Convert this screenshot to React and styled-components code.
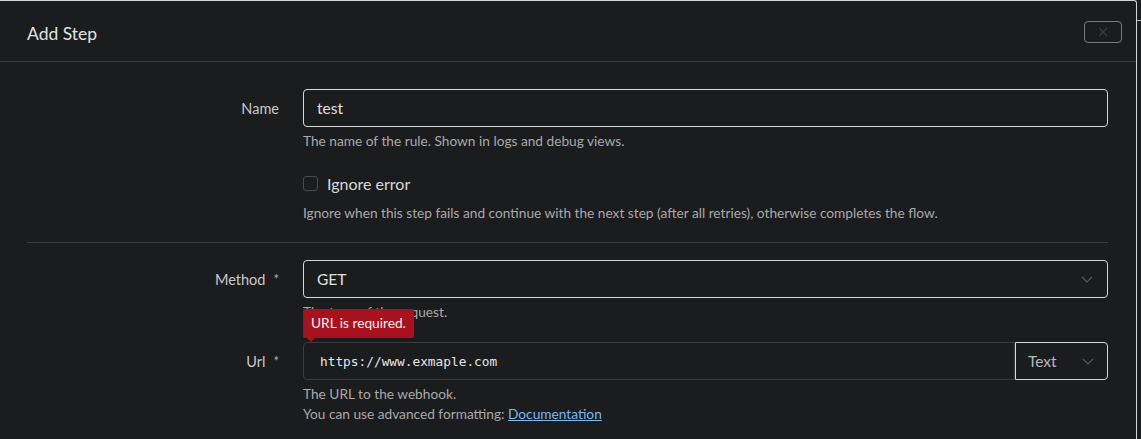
import React from 'react';
import styled, { createGlobalStyle } from 'styled-components';

const GlobalStyle = createGlobalStyle`
  html, body {
    margin: 0;
    padding: 0;
    background: #1b1c1e;
    overflow: hidden;
  }
  body {
    font-family: Lato, "Noto Sans", sans-serif;
    color: #dcdcdc;
  }
`;

const Page = styled.div`
  display: flex;
  height: 439px;
`;

const Modal = styled.div`
  width: 1137px;
  flex: none;
  background: #1b1c1e;
  border-top: 1px solid #d2d2d2;
  border-right: 1px solid #d2d2d2;
  border-top-right-radius: 3px;
  box-sizing: border-box;
`;

const Backdrop = styled.div`
  flex: 1;
  padding-top: 20px;

  &:before {
    content: '';
    display: block;
    height: 1px;
    background: #bdbdbd;
  }
`;

const Header = styled.div`
  display: flex;
  align-items: center;
  justify-content: space-between;
  height: 60px;
  padding: 0 14px 0 27px;
  border-bottom: 1px solid #3a3b3d;
`;

const Title = styled.h5`
  margin: 0;
  padding-top: 4px;
  font-size: 17.5px;
  font-weight: 400;
  color: #e2e2e2;
`;

const CloseButton = styled.button`
  display: flex;
  align-items: center;
  justify-content: center;
  width: 38px;
  height: 22px;
  margin-top: 1px;
  padding: 0;
  background: transparent;
  border: 1px solid #7a7a7a;
  border-radius: 4px;
  color: #3c3c3c;
`;

const Body = styled.div`
  padding: 27px 28px 0 27px;
`;

const Row = styled.div`
  display: grid;
  grid-template-columns: 252px 1fr;
  column-gap: 24px;
  align-items: start;
`;

const Label = styled.label`
  display: flex;
  justify-content: flex-end;
  align-items: center;
  gap: 8px;
  height: 38px;
  font-size: 14.5px;
  color: #c9c9c9;
`;

const Star = styled.span`
  font-size: 13px;
  color: #b0b0b0;
`;

const Field = styled.div`
  position: relative;
  display: flex;
  flex-direction: column;
`;

const Input = styled.div`
  display: flex;
  align-items: center;
  flex: ${({ joined }) => (joined ? '1' : 'none')};
  height: 38px;
  box-sizing: border-box;
  padding: 0 13px;
  border: 1px solid ${({ dim }) => (dim ? '#3a3b3d' : '#d6d6d6')};
  border-radius: ${({ joined }) => (joined ? '4px 0 0 4px' : '4px')};
  font-size: 15.5px;
  color: #e0e0e0;
`;

const Mono = styled.span`
  padding-left: 3px;
  font-family: "DejaVu Sans Mono", "Liberation Mono", monospace;
  font-size: 12.8px;
  color: #e6e6e6;
`;

const Select = styled(Input)`
  justify-content: space-between;
  padding-right: 14px;
`;

const InputGroup = styled.div`
  display: flex;
`;

const Addon = styled.div`
  display: flex;
  align-items: center;
  justify-content: space-between;
  width: 93px;
  height: 38px;
  box-sizing: border-box;
  padding: 0 13px 0 12px;
  border: 1px solid #d6d6d6;
  border-radius: 0 4px 4px 0;
  font-size: 15.5px;
  color: #b9b9b9;
`;

const Hint = styled.div`
  margin-top: ${({ top }) => (top === undefined ? 4 : top)}px;
  font-size: 13.7px;
  line-height: 20px;
  color: #a9a9a9;
`;

const Link = styled.a`
  color: #7ab8ee;
  text-decoration: underline;
`;

const CheckRow = styled.div`
  display: flex;
  align-items: center;
  gap: 9px;
  height: 22px;
  margin-top: 21px;
  font-size: 16px;
  color: #d8d8d8;
`;

const Box = styled.span`
  width: 15px;
  height: 15px;
  box-sizing: border-box;
  border: 1px solid #4a4b4d;
  border-radius: 3px;
`;

const Divider = styled.hr`
  margin: 19px 0 17px;
  border: 0;
  border-top: 1px solid #3a3b3d;
`;

const Gap = styled.div`
  height: ${({ h }) => h}px;
`;

const Tooltip = styled.div`
  position: absolute;
  left: 0;
  top: -33px;
  padding: 5px 8px 6px;
  background: #a8121f;
  border-radius: 2px;
  font-size: 13.7px;
  line-height: 18px;
  color: #f2f2f2;
  white-space: nowrap;

  &:after {
    content: '';
    position: absolute;
    left: 4px;
    bottom: -4px;
    border-left: 4px solid transparent;
    border-right: 4px solid transparent;
    border-top: 4px solid #a8121f;
  }
`;

const Chevron = () => (
  <svg width="12" height="7" viewBox="0 0 12 7" fill="none">
    <polyline points="1,1 6,6 11,1" stroke="#5a5b5d" strokeWidth="1.2" />
  </svg>
);

const CloseIcon = () => (
  <svg width="10" height="10" viewBox="0 0 10 10">
    <path d="M1 1L9 9M9 1L1 9" stroke="currentColor" strokeWidth="1.3" />
  </svg>
);

const App = () => (
  <>
    <GlobalStyle />
    <Page>
      <Modal>
        <Header>
          <Title>Add Step</Title>
          <CloseButton aria-label="Close">
            <CloseIcon />
          </CloseButton>
        </Header>
        <Body>
          <Row>
            <Label>Name</Label>
            <Field>
              <Input>test</Input>
              <Hint>The name of the rule. Shown in logs and debug views.</Hint>
              <CheckRow>
                <Box />
                Ignore error
              </CheckRow>
              <Hint top={9}>
                Ignore when this step fails and continue with the next step (after all retries), otherwise completes the flow.
              </Hint>
            </Field>
          </Row>
          <Divider />
          <Row>
            <Label>
              Method <Star>*</Star>
            </Label>
            <Field>
              <Select>
                GET
                <Chevron />
              </Select>
              <Hint>The type of the request.</Hint>
            </Field>
          </Row>
          <Gap h={20} />
          <Row>
            <Label>
              Url <Star>*</Star>
            </Label>
            <Field>
              <Tooltip>URL is required.</Tooltip>
              <InputGroup>
                <Input dim joined>
                  <Mono>https://www.exmaple.com</Mono>
                </Input>
                <Addon>
                  Text
                  <Chevron />
                </Addon>
              </InputGroup>
              <Hint>The URL to the webhook.</Hint>
              <Hint top={0}>
                You can use advanced formatting: <Link href="#">Documentation</Link>
              </Hint>
            </Field>
          </Row>
        </Body>
      </Modal>
      <Backdrop />
    </Page>
  </>
);

export default App;
